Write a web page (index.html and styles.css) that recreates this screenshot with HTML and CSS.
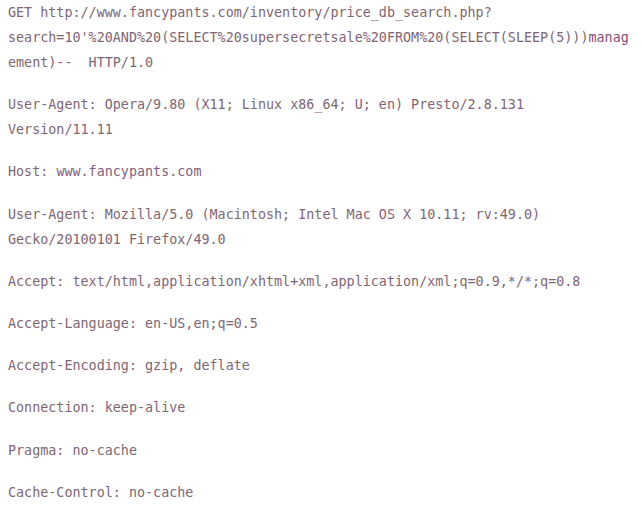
FILE: index.html
```html
<!DOCTYPE html>
<html lang="en">
<head>
<meta charset="utf-8">
<title>HTTP request</title>
<link rel="stylesheet" href="styles.css">
</head>
<body>
<main class="request">
  <p class="block"><span class="line">GET http://www.fancypants.com/inventory/price_db_search.php?</span><span class="line">search=10'%20AND%20(SELECT%20supersecretsale%20FROM%20(SELECT(SLEEP(5)))<span class="hl">manag</span></span><span class="line">ement)--  HTTP/1.0</span></p>
  <p class="block"><span class="line">User-Agent: Opera/9.80 (X11; Linux x86_64; U; en) Presto/2.8.131</span><span class="line">Version/11.11</span></p>
  <p class="block"><span class="line">Host: <span class="soft">www.fancypants.com</span></span></p>
  <p class="block"><span class="line">User-Agent: Mozilla/5.0 (Macintosh; Intel Mac OS X 10.11; rv:49.0)</span><span class="line">Gecko/20100101 Firefox/49.0</span></p>
  <p class="block"><span class="line">Accept: text/html,application/xhtml+xml,application/xml;q=0.9,*/*;q=0.8</span></p>
  <p class="block"><span class="line">Accept-Language: en-US,en;q=0.5</span></p>
  <p class="block"><span class="line">Accept-Encoding: gzip, deflate</span></p>
  <p class="block"><span class="line">Connection: keep-alive</span></p>
  <p class="block"><span class="line">Pragma: no-cache</span></p>
  <p class="block"><span class="line">Cache-Control: no-cache</span></p>
</main>
</body>
</html>
```
FILE: styles.css
```css
html, body {
  margin: 0;
  padding: 0;
  background: #ffffff;
}

.request {
  display: flex;
  flex-direction: column;
  gap: 17.2px;
  padding: 0 0 0 8px;
  font-family: "DejaVu Sans Mono", "Liberation Mono", monospace;
  font-size: 13.4px;
  line-height: 25px;
  color: #7f6673;
}

.block {
  margin: 0;
  display: flex;
  flex-direction: column;
}

.line {
  white-space: pre;
}

.hl {
  color: #8e4a74;
}

.soft {
  color: #85607a;
}
```
